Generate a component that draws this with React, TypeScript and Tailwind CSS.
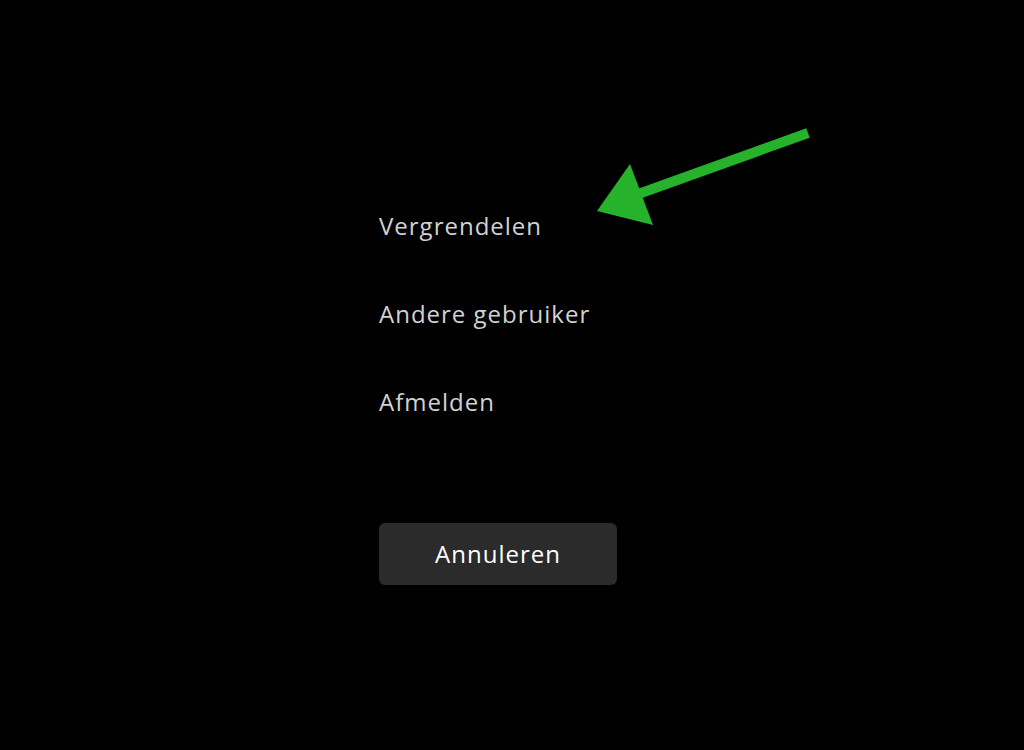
import React from 'react';

const items = ['Vergrendelen', 'Andere gebruiker', 'Afmelden'];

const Arrow: React.FC = () => (
    <svg className="absolute left-0 top-0" width="1024" height="750" viewBox="0 0 1024 750">
        <line x1="808" y1="133" x2="630" y2="197" stroke="#26b22b" strokeWidth="10" />
        <polygon points="597,211 630,164 653,225" fill="#26b22b" />
    </svg>
);

export default function App() {
    return (
        <div className="relative w-[1024px] h-[750px] bg-black overflow-hidden" style={{ fontFamily: '"Open Sans", "Noto Sans", sans-serif' }}>
            <div className="flex flex-col pl-[379px] pt-[208px]">
                {items.map((label) => (
                    <div key={label} className="h-[88px] text-[24px] tracking-[1px] leading-[36px] text-[#d2d2d2]">
                        {label}
                    </div>
                ))}
                <button className="mt-[51px] w-[238px] h-[62px] rounded-md bg-[#2b2b2b] text-[24px] tracking-[1px] text-white flex items-center justify-center">
                    Annuleren
                </button>
            </div>
            <Arrow />
        </div>
    );
}
